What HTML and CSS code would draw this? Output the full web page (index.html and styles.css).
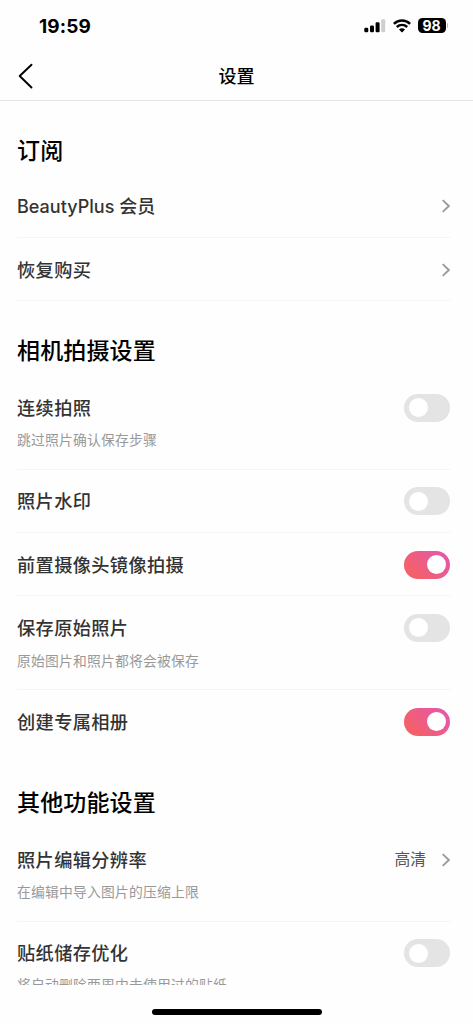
FILE: index.html
```html
<!DOCTYPE html>
<html lang="zh-CN">
<head>
<meta charset="utf-8">
<title>设置</title>
<link rel="stylesheet" href="styles.css">
</head>
<body>
<div class="screen">
  <div class="status">
    <span class="time">19:59</span>
    <div class="indicators">
      <svg class="signal" width="22" height="14" viewBox="0 0 22 14">
        <rect x="0.3" y="8.7" width="4" height="4.5" rx="1.2"/>
        <rect x="6" y="6.6" width="4" height="6.6" rx="1.2"/>
        <rect x="11.6" y="3.3" width="4" height="9.9" rx="1.2"/>
        <rect x="17.2" y="0.2" width="4" height="13" rx="1.2" fill="#cfcfcf"/>
      </svg>
      <svg class="wifi" width="18" height="14" viewBox="0 0 18 14">
        <g fill="none" stroke="#000" stroke-width="2.4">
          <path d="M0.9 4.9C5.5 0.4 12.5 0.4 17.1 4.9"/>
          <path d="M3.8 8C6.8 5.2 11.2 5.2 14.2 8"/>
        </g>
        <path d="M6 10.4C7.7 8.8 10.3 8.8 12 10.4L9.6 12.9Q9 13.5 8.4 12.9Z"/>
      </svg>
      <span class="battery">98</span><span class="cap"></span>
    </div>
  </div>
  <header class="nav">
    <svg class="back" width="16" height="26" viewBox="0 0 16 26"><path d="M14.5 1.7L2.7 13L14.5 24.5"/></svg>
    <h1>设置</h1>
  </header>
  <main class="list">
    <h2 class="first">订阅</h2>
    <div class="row"><div class="main"><span class="label latin">BeautyPlus 会员</span><svg class="chev" width="9" height="14" viewBox="0 0 9 14"><path d="M1.7 1.1L7.9 7L1.7 12.9"/></svg></div></div>
    <div class="row"><div class="main"><span class="label">恢复购买</span><svg class="chev" width="9" height="14" viewBox="0 0 9 14"><path d="M1.7 1.1L7.9 7L1.7 12.9"/></svg></div></div>

    <h2>相机拍摄设置</h2>
    <div class="row tall"><div class="main"><span class="label">连续拍照</span><span class="switch"></span></div><p>跳过照片确认保存步骤</p></div>
    <div class="row"><div class="main"><span class="label">照片水印</span><span class="switch"></span></div></div>
    <div class="row"><div class="main"><span class="label">前置摄像头镜像拍摄</span><span class="switch on"></span></div></div>
    <div class="row tall"><div class="main"><span class="label">保存原始照片</span><span class="switch"></span></div><p>原始图片和照片都将会被保存</p></div>
    <div class="row last"><div class="main"><span class="label">创建专属相册</span><span class="switch on"></span></div></div>

    <h2>其他功能设置</h2>
    <div class="row tall"><div class="main"><span class="label">照片编辑分辨率</span><span class="value">高清</span><svg class="chev" width="9" height="14" viewBox="0 0 9 14"><path d="M1.7 1.1L7.9 7L1.7 12.9"/></svg></div><p>在编辑中导入图片的压缩上限</p></div>
    <div class="row tall last"><div class="main"><span class="label">贴纸储存优化</span><span class="switch"></span></div><p>将自动删除两周内未使用过的贴纸</p></div>
  </main>
  <footer class="home"><span class="bar"></span></footer>
</div>
</body>
</html>
```
FILE: styles.css
```css
* { box-sizing: border-box; margin: 0; padding: 0; }
body {
  background: #fefefe;
  font-family: "Noto Sans CJK SC", sans-serif;
  color: #000;
}
.screen {
  width: 473px;
  height: 1024px;
  display: flex;
  flex-direction: column;
  overflow: hidden;
}
.status {
  height: 51px;
  flex: none;
  display: flex;
  align-items: center;
  justify-content: space-between;
  padding: 0 25px 0 39px;
}
.time { font: 700 19px/22px Inter, sans-serif; letter-spacing: 0.15px; padding-top: 3px; }
.indicators { display: flex; align-items: center; }
.signal { margin-right: 7px; }
.wifi { margin-right: 7px; }
.battery {
  width: 28px;
  height: 15px;
  border-radius: 4.5px;
  background: #000;
  color: #fff;
  font: 700 14px/15px Inter, sans-serif;
  text-align: center;
}
.cap { width: 1.5px; height: 5px; margin-left: 1px; border-radius: 0 2px 2px 0; background: #bbb; }
.nav {
  height: 50px;
  flex: none;
  display: grid;
  grid-template-columns: 60px 1fr 60px;
  align-items: center;
  border-bottom: 1px solid #e4e4e4;
}
.back { margin-left: 17px; }
.back path { fill: none; stroke: #000; stroke-width: 1.9; stroke-linecap: round; stroke-linejoin: round; }
.nav h1 { font-size: 18px; font-weight: 500; line-height: 24px; text-align: center; padding-bottom: 2px; }
.list { flex: none; height: 884px; overflow: hidden; padding: 0 23px 0 17px; }
h2 {
  height: 74.7px;
  padding-top: 31.8px;
  font-size: 23px;
  font-weight: 500;
  line-height: 32px;
  letter-spacing: 0.15px;
}
h2.first { height: 73.7px; padding-top: 32px; }
.row { height: 63.3px; border-bottom: 1px solid #f4f4f4; }
.row.tall { height: 93.7px; }
.row.last { border-bottom-color: transparent; }
.main { height: 63.3px; display: flex; align-items: center; }
.label {
  flex: 1;
  padding-bottom: 2px;
  font-size: 18.2px;
  font-weight: 500;
  line-height: 26px;
  letter-spacing: 0.38px;
  color: #333;
}
.latin { font-family: Inter, "Noto Sans CJK SC", sans-serif; font-size: 18px; letter-spacing: 0.02px; padding: 2px 0 0; }
.row p {
  margin-top: -9.8px;
  font-size: 13.8px;
  line-height: 20px;
  letter-spacing: 0.2px;
  color: #999;
}
.row.last p { margin-top: -10.8px; }
.value { font-size: 15.8px; line-height: 22px; color: #555; margin-right: 15px; padding-bottom: 2px; }
.chev path { fill: none; stroke: #999; stroke-width: 1.8; }
.switch {
  width: 46px;
  height: 28px;
  padding: 4.5px;
  border-radius: 14px;
  background: #e4e4e4;
  display: flex;
}
.switch::before { content: ""; width: 19px; height: 19px; border-radius: 50%; background: #fff; }
.switch.on { justify-content: flex-end; background: linear-gradient(45deg, #f4606a 20%, #e559a5 85%); }
.home { flex: 1; display: flex; justify-content: center; align-items: flex-start; padding-top: 24px; }
.bar { width: 170px; height: 6px; border-radius: 3px; background: #000; }
```
